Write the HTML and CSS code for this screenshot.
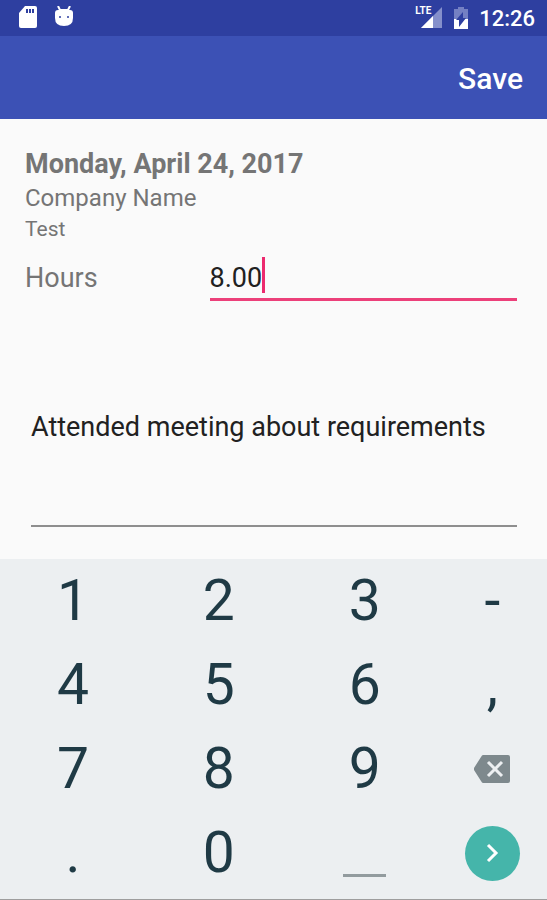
FILE: index.html
```html
<!DOCTYPE html>
<html lang="en">
<head>
    <meta charset="UTF-8">
    <meta name="viewport" content="width=device-width, initial-scale=1.0">
    <title>Time Entry</title>
    <link rel="stylesheet" href="styles.css">
</head>
<body>
    <div class="status-bar">
        <div class="status-icons">
            <svg width="20" height="24" viewBox="0 0 20 24" aria-hidden="true">
                <path fill="#fff" d="M7 0h10q2 0 2 2v18q0 2-2 2H3q-2 0-2-2V7z"/>
                <path fill="#2e3fa0" d="M8 3h2v4H8zM11 3h2v4h-2zM14 3h2v4h-2z"/>
            </svg>
            <svg width="20" height="24" viewBox="0 0 20 24" aria-hidden="true">
                <path fill="none" stroke="#fff" stroke-width="2" d="M4 0l2 4h8l2-4"/>
                <path fill="#fff" d="M4 4h12q3 0 3 3v5q0 8-9 8t-9-8V7q0-3 3-3z"/>
                <circle cx="6" cy="11" r="1" fill="#2e3fa0"/>
                <circle cx="14" cy="11" r="1" fill="#2e3fa0"/>
            </svg>
        </div>
        <div class="status-icons status-right">
            <div class="signal">
                <svg width="28" height="24" viewBox="0 0 28 24" aria-hidden="true">
                    <path fill="#8590cb" d="M27 1v21H6z"/>
                    <path fill="#fff" d="M18 10v12H6z"/>
                </svg>
                <span class="network">LTE</span>
            </div>
            <svg width="16" height="24" viewBox="0 0 16 24" aria-hidden="true">
                <path fill="#7480c3" d="M5 1h6v2h4v20H1V3h4z"/>
                <path fill="#fff" d="M1 13h14v10H1z"/>
                <path fill="#2e3fa0" d="M10 6v6h3l-7 9v-7H3z"/>
            </svg>
            <span class="clock">12:26</span>
        </div>
    </div>

    <div class="toolbar">
        <button class="save-btn" type="button">Save</button>
    </div>

    <form class="entry">
        <h1 class="entry-date">Monday, April 24, 2017</h1>
        <div class="entry-company">Company Name</div>
        <div class="entry-project">Test</div>
        <div class="hours-row">
            <label for="hours">Hours</label>
            <div class="hours-field">
                <input id="hours" type="text" inputmode="decimal" value="8.00">
                <span class="caret"></span>
            </div>
        </div>
        <textarea class="notes" aria-label="Notes">Attended meeting about requirements</textarea>
    </form>

    <div class="keypad">
        <button type="button">1</button>
        <button type="button">2</button>
        <button type="button">3</button>
        <button type="button">-</button>

        <button type="button">4</button>
        <button type="button">5</button>
        <button type="button">6</button>
        <button type="button">,</button>

        <button type="button">7</button>
        <button type="button">8</button>
        <button type="button">9</button>
        <button type="button" aria-label="Backspace">
            <svg width="38" height="28" viewBox="0 0 38 28" aria-hidden="true">
                <path fill="#7e898d" d="M10 0h25q2 0 2 2v24q0 2-2 2H10q-1 0-2-2L1 15v-2L8 2q1-2 2-2z"/>
                <path fill="none" stroke="#eceff1" stroke-width="3" d="M15 7l14 14M29 7L15 21"/>
            </svg>
        </button>

        <button type="button">.</button>
        <button type="button">0</button>
        <button type="button" aria-label="Space"><span class="space-mark"></span></button>
        <button type="button" aria-label="Next">
            <span class="next">
                <svg width="14" height="20" viewBox="0 0 14 20" aria-hidden="true">
                    <path fill="none" stroke="#fff" stroke-width="3" d="M3 2l8 8-8 8"/>
                </svg>
            </span>
        </button>
    </div>
</body>
</html>
```
FILE: styles.css
```css
* {
    box-sizing: border-box;
}
body {
    display: flex;
    flex-direction: column;
    min-height: 100vh;
    margin: 0;
    background: #fafafa;
    color: #757575;
    font-family: Roboto, sans-serif;
}
button, input, textarea {
    border: none;
    padding: 0;
    background: none;
    font-family: inherit;
    outline: none;
}
svg {
    display: block;
}

/* Status bar */
.status-bar {
    display: flex;
    justify-content: space-between;
    align-items: center;
    height: 36px;
    padding: 0 12px 0 18px;
    background: #2e3fa0;
    color: white;
}
.status-icons {
    display: flex;
    align-items: center;
    gap: 16px;
}
.status-right {
    gap: 10px;
}
.signal {
    position: relative;
}
.network {
    position: absolute;
    top: 0;
    left: 0;
    font-size: 10px;
    line-height: 10px;
    font-weight: 700;
}
.clock {
    font-size: 22px;
    font-weight: 500;
}

/* Toolbar */
.toolbar {
    display: flex;
    justify-content: flex-end;
    height: 83px;
    padding: 2px 24px 0;
    background: #3c51b5;
}
.save-btn {
    color: white;
    font-size: 30px;
    font-weight: 500;
    cursor: pointer;
}

/* Entry form */
.entry {
    flex: 1;
    display: flex;
    flex-direction: column;
    padding: 28px 30px 32px 25px;
}
.entry-date {
    margin: 0;
    font-size: 27px;
    line-height: 34px;
    font-weight: 700;
}
.entry-company {
    font-size: 24px;
    line-height: 34px;
}
.entry-project {
    font-size: 21px;
    line-height: 28px;
}
.hours-row {
    display: flex;
    align-items: baseline;
    margin-top: 14px;
    font-size: 27px;
}
.hours-row label {
    flex: 3;
}
.hours-field {
    flex: 5;
    display: flex;
    align-items: flex-start;
    height: 44px;
    border-bottom: 3px solid #ec407a;
}
.hours-field input {
    field-sizing: content;
    height: 41px;
    color: #212121;
    font-size: 27px;
}
.caret {
    width: 3px;
    height: 36px;
    background: #ec2a6e;
}
.notes {
    flex: 1;
    margin: 108px 0 0 6px;
    border-bottom: 2px solid #8e8e8e;
    color: #212121;
    font-size: 27px;
    line-height: 36px;
    resize: none;
}

/* Number pad */
.keypad {
    display: grid;
    grid-template-columns: 4fr 4fr 4fr 3fr;
    grid-auto-rows: 84px;
    padding-bottom: 4px;
    border-bottom: 1px solid #9e9e9e;
    background: #eceff1;
}
.keypad button {
    display: flex;
    justify-content: center;
    align-items: center;
    color: #1f3a45;
    font-size: 57px;
    line-height: 86px;
    cursor: pointer;
}
.space-mark {
    align-self: flex-end;
    width: 43px;
    height: 3px;
    margin-bottom: 18px;
    background: #929b9e;
}
.next {
    display: flex;
    justify-content: center;
    align-items: center;
    width: 55px;
    height: 55px;
    border-radius: 50%;
    background: #45b5aa;
}
```
